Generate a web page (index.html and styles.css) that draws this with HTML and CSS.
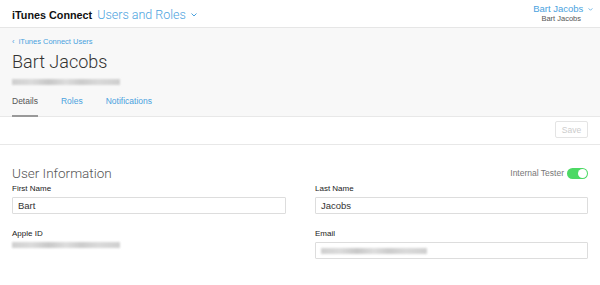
FILE: index.html
```html
<!DOCTYPE html>
<html>
<head>
    <title>Users and Roles</title>
    <link rel="stylesheet" href="styles.css">
</head>
<body>

<header class="topbar">
    <div class="brand">
        <span class="app-name">iTunes Connect</span>
        <a class="section-menu" href="#">Users and Roles
            <svg class="caret" width="6" height="4" viewBox="0 0 6 4"><polyline points="0.5,0.5 3,3 5.5,0.5" fill="none" stroke="currentColor" stroke-width="1"/></svg>
        </a>
    </div>
    <div class="account">
        <a class="account-name" href="#">Bart Jacobs
            <svg class="caret" width="6" height="4" viewBox="0 0 6 4"><polyline points="0.5,0.5 3,3 5.5,0.5" fill="none" stroke="currentColor" stroke-width="1"/></svg>
        </a>
        <div class="account-team">Bart Jacobs</div>
    </div>
</header>

<section class="page-head">
    <a class="back-link" href="#">&lsaquo;&nbsp; iTunes Connect Users</a>
    <h1>Bart Jacobs</h1>
    <div class="blurred blurred-head"></div>
    <nav class="tabs">
        <a class="tab active" href="#">Details</a>
        <a class="tab" href="#">Roles</a>
        <a class="tab" href="#">Notifications</a>
    </nav>
</section>

<div class="toolbar">
    <button class="save" disabled>Save</button>
</div>

<main class="content">
    <div class="section-title">
        <h2>User Information</h2>
        <label class="tester">Internal Tester <span class="switch"><span class="knob"></span></span></label>
    </div>

    <div class="form-grid">
        <div class="field">
            <label>First Name</label>
            <div class="input">Bart</div>
        </div>
        <div class="field">
            <label>Last Name</label>
            <div class="input">Jacobs</div>
        </div>
        <div class="field">
            <label>Apple ID</label>
            <div class="blurred blurred-id"></div>
        </div>
        <div class="field">
            <label>Email</label>
            <div class="input"><div class="blurred blurred-mail"></div></div>
        </div>
    </div>
</main>

</body>
</html>
```

FILE: styles.css
```css
body {
    font-family: "Liberation Sans", Arial, sans-serif;
    margin: 0;
    padding: 0;
    background-color: #fff;
    color: #333;
}

a {
    color: #4aa2de;
    text-decoration: none;
}

.topbar {
    display: flex;
    justify-content: space-between;
    align-items: flex-start;
    height: 27px;
    padding: 0 7px 0 12px;
    border-bottom: 1px solid #e6e6e6;
}

.brand {
    display: flex;
    align-items: baseline;
    padding-top: 7px;
}

.app-name {
    font-size: 10.8px;
    font-weight: bold;
    color: #111;
}

.section-menu {
    font-family: Roboto, "Liberation Sans", sans-serif;
    font-weight: 300;
    font-size: 12.5px;
    margin-left: 5px;
    color: #4aa2de;
}

.caret {
    margin-left: 2px;
    vertical-align: 2px;
}

.account {
    text-align: right;
    padding-top: 3px;
}

.account-name {
    display: block;
    font-size: 9.5px;
    line-height: 11px;
}

.account-name .caret {
    width: 5px;
    height: 3px;
    vertical-align: 1px;
}

.account-team {
    font-size: 7.5px;
    line-height: 10px;
    color: #555;
    margin-right: 12px;
}

.page-head {
    background-color: #f8f8f8;
    padding: 9px 12px 0;
    border-bottom: 1px solid #e8e8e8;
}

.back-link {
    display: block;
    font-size: 7.5px;
    line-height: 10px;
}

.page-head h1 {
    font-family: Roboto, "Liberation Sans", sans-serif;
    font-weight: 300;
    font-size: 18px;
    line-height: 20px;
    color: #333;
    margin: 5px 0 0;
}

.blurred {
    background: linear-gradient(90deg, #c8c8c8 0%, #d6d6d6 18%, #bfbfbf 34%, #d8d8d8 50%, #c4c4c4 64%, #d4d4d4 80%, #c8c8c8 100%);
    filter: blur(1.2px);
    height: 6px;
    opacity: 0.85;
}

.blurred-head {
    width: 108px;
    margin-top: 7px;
}

.tabs {
    display: flex;
    margin-top: 11px;
}

.tab {
    font-size: 8.5px;
    line-height: 10px;
    padding-bottom: 9px;
    margin-right: 23px;
    border-bottom: 2px solid transparent;
    margin-bottom: -1px;
}

.tab.active {
    color: #555;
    border-bottom-color: #999;
}

.toolbar {
    display: flex;
    justify-content: flex-end;
    padding: 4px 12px 6px;
    border-bottom: 1px solid #e8e8e8;
}

.save {
    font-family: "Liberation Sans", Arial, sans-serif;
    font-size: 8.5px;
    color: #ccc;
    background-color: #fff;
    border: 1px solid #e4e4e4;
    border-radius: 2px;
    width: 33px;
    height: 17px;
    padding: 0;
}

.content {
    padding: 20px 12px 0;
}

.section-title {
    display: flex;
    justify-content: space-between;
    align-items: center;
    height: 16px;
}

.section-title h2 {
    font-family: Roboto, "Liberation Sans", sans-serif;
    font-weight: 300;
    font-size: 13.5px;
    line-height: 16px;
    color: #555;
    margin: 0;
}

.tester {
    display: flex;
    align-items: center;
    font-size: 8.5px;
    color: #777;
}

.switch {
    width: 19px;
    height: 11px;
    border-radius: 6px;
    background-color: #4cd964;
    margin-left: 3px;
    display: flex;
    justify-content: flex-end;
    align-items: center;
    padding: 0 1px;
}

.knob {
    width: 9px;
    height: 9px;
    border-radius: 50%;
    background-color: #fff;
}

.form-grid {
    display: grid;
    grid-template-columns: 274px 273px;
    column-gap: 29px;
    row-gap: 15px;
    margin-top: 3px;
}

.field label {
    display: block;
    font-size: 8px;
    line-height: 10px;
    color: #222;
    margin-bottom: 3px;
}

.input {
    box-sizing: border-box;
    height: 17px;
    border: 1px solid #ddd;
    border-radius: 1px;
    font-size: 9.5px;
    padding: 0 5px;
    color: #333;
    display: flex;
    align-items: center;
}

.blurred-id {
    width: 108px;
}

.blurred-mail {
    width: 106px;
}
```
